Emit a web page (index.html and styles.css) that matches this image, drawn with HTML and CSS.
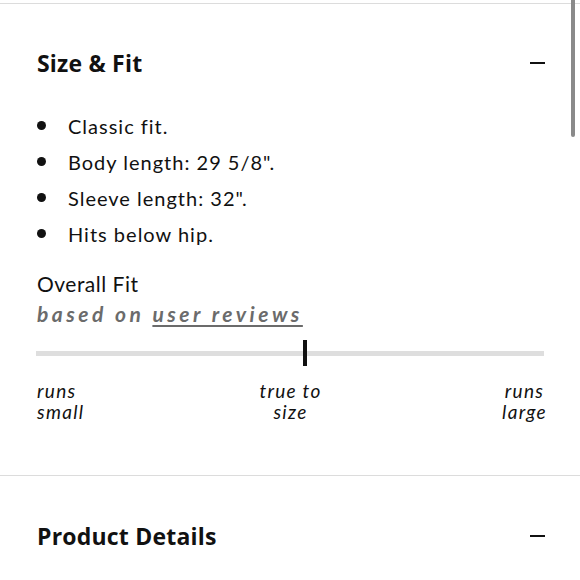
FILE: index.html
```html
<!DOCTYPE html>
<html>
<head>
<meta charset="utf-8">
<link rel="stylesheet" href="styles.css">
</head>
<body>
<div class="page">
  <div class="rule top-rule"></div>
  <section class="acc">
    <div class="acc-head">
      <h2 class="acc-title">Size &amp; Fit</h2>
      <span class="minus"></span>
    </div>
    <ul class="facts">
      <li>Classic fit.</li>
      <li>Body length: 29 5/8".</li>
      <li>Sleeve length: 32".</li>
      <li>Hits below hip.</li>
    </ul>
    <div class="fit-title">Overall Fit</div>
    <div class="fit-sub">based on <a class="fit-link" href="#">user reviews</a></div>
    <div class="slider">
      <div class="track"></div>
      <div class="marker" style="left: 52.9%"></div>
    </div>
    <div class="labels">
      <span class="lab lab-left">runs<br>small</span>
      <span class="lab lab-mid">true to<br>size</span>
      <span class="lab lab-right">runs<br>large</span>
    </div>
  </section>
  <div class="rule mid-rule"></div>
  <section class="acc">
    <div class="acc-head second">
      <h2 class="acc-title">Product Details</h2>
      <span class="minus"></span>
    </div>
  </section>
  <div class="scrollbar"></div>
</div>
</body>
</html>
```
FILE: styles.css
```css
html, body {
  margin: 0;
  padding: 0;
  background: #fff;
}
body {
  font-family: Lato, "Noto Sans", sans-serif;
  color: #111;
}
.page {
  position: relative;
  width: 580px;
  height: 580px;
  overflow: hidden;
}
.rule {
  border-top: 1px solid #dcdcdc;
}
.top-rule {
  margin-top: 3px;
}
.acc {
  padding: 0 36px 0 37px;
}
.acc-head {
  display: flex;
  align-items: center;
  justify-content: space-between;
  margin-top: 44px;
  height: 30px;
}
.acc-head.second {
  margin-top: 45px;
}
.acc-title {
  margin: 0;
  font-family: "Open Sans", Lato, sans-serif;
  font-size: 23px;
  font-weight: 700;
  line-height: 30px;
  letter-spacing: 0.2px;
}
.minus {
  display: block;
  width: 15px;
  height: 2px;
  background: #111;
  margin-right: -1px;
  margin-top: -1px;
}
.facts {
  list-style: none;
  margin: 30px 0 0;
  padding: 0;
}
.facts li {
  position: relative;
  padding-left: 31px;
  font-size: 20px;
  line-height: 36px;
  letter-spacing: 1px;
}
.facts li::before {
  content: "";
  position: absolute;
  left: 0;
  top: 13px;
  width: 9px;
  height: 9px;
  border-radius: 50%;
  background: #111;
}
.fit-title {
  margin-top: 16px;
  font-size: 21px;
  line-height: 31px;
  letter-spacing: 0.5px;
}
.fit-sub {
  font-size: 21px;
  line-height: 30px;
  font-weight: 700;
  font-style: italic;
  color: #6b6b6b;
  letter-spacing: 3.5px;
}
.fit-link {
  color: #6b6b6b;
  text-decoration: underline;
  text-underline-offset: 3px;
  text-decoration-thickness: 1.5px;
}
.slider {
  position: relative;
  margin-top: 11px;
  height: 26px;
  margin-left: -1px;
}
.track {
  position: absolute;
  left: 0;
  right: 0;
  top: 11px;
  height: 5px;
  background: #dedede;
}
.marker {
  position: absolute;
  top: 0;
  width: 4px;
  height: 26px;
  background: #111;
  margin-left: -2px;
}
.labels {
  margin-top: 14px;
  display: grid;
  grid-template-columns: 1fr 1fr 1fr;
  font-size: 19px;
  line-height: 21px;
  font-style: italic;
  letter-spacing: 1.3px;
}
.lab-left {
  justify-self: start;
}
.lab-mid {
  justify-self: center;
  text-align: center;
}
.lab-right {
  justify-self: end;
  text-align: center;
  margin-right: -3px;
}
.mid-rule {
  margin-top: 53px;
}
.scrollbar {
  position: absolute;
  right: 5px;
  top: 0;
  width: 4px;
  height: 137px;
  border-radius: 0 0 2px 2px;
  background: #8a8a8a;
}
```
